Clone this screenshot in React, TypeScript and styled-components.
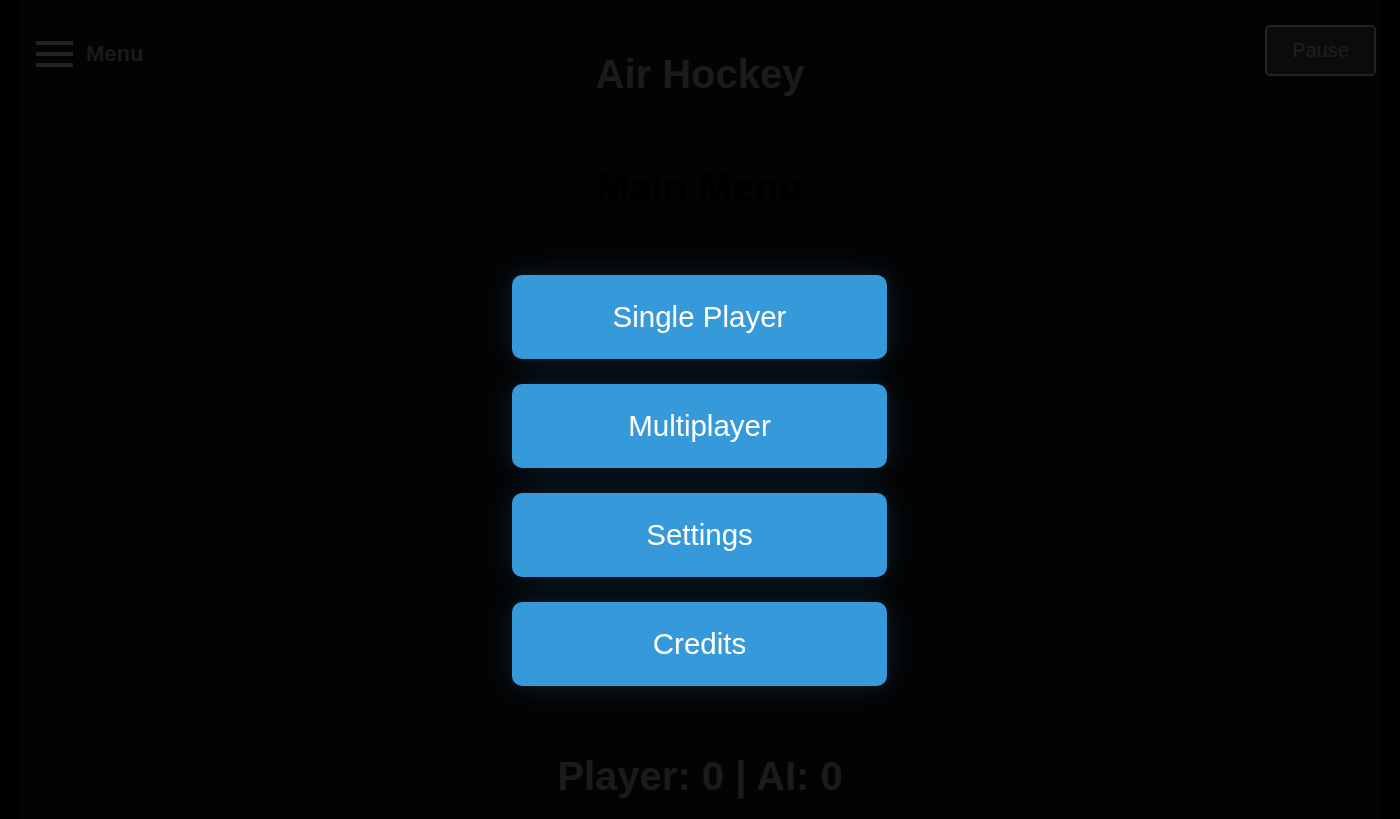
import React from "react";
import styled, { createGlobalStyle } from "styled-components";

const GlobalStyle = createGlobalStyle`
  html, body {
    margin: 0;
    padding: 0;
    background: #000;
    font-family: "Liberation Sans", Arial, sans-serif;
  }
  * {
    box-sizing: border-box;
  }
`;

const Page = styled.div`
  position: relative;
  min-height: 100vh;
  margin: 0 20px;
  background: #030303;
  display: flex;
  flex-direction: column;
  align-items: center;
`;

const TopBar = styled.header`
  width: 100%;
  display: grid;
  grid-template-columns: 1fr auto 1fr;
  align-items: start;
  padding: 25px 4px 0;
`;

const MenuToggle = styled.button`
  justify-self: start;
  display: flex;
  align-items: center;
  gap: 13px;
  margin: 16px 0 0 12px;
  padding: 0;
  border: none;
  background: none;
  color: #1b1b1b;
  font-family: inherit;
  font-size: 22px;
  font-weight: 700;
`;

const Burger = styled.span`
  display: flex;
  flex-direction: column;
  gap: 7px;
  width: 37px;

  span {
    height: 4px;
    background: #232323;
  }
`;

const Title = styled.h1`
  margin: 26px 0 0;
  font-size: 40px;
  font-weight: 700;
  color: #1b1b1b;
  line-height: 46px;
`;

const PauseButton = styled.button`
  justify-self: end;
  width: 111px;
  height: 51px;
  border: 2px solid #232323;
  border-radius: 5px;
  background: #0b0b0b;
  color: #202020;
  font-family: inherit;
  font-size: 20px;
`;

const Board = styled.div`
  flex: 1;
`;

const Score = styled.div`
  margin-bottom: 20px;
  font-size: 40px;
  font-weight: 700;
  color: #1b1b1b;
  line-height: 46px;
`;

const Overlay = styled.div`
  position: fixed;
  inset: 0;
  display: flex;
  flex-direction: column;
  align-items: center;
  padding: 164px 1px 0 0;
`;

const MenuHeading = styled.h2`
  margin: 0 0 65px;
  font-size: 40px;
  font-weight: 700;
  line-height: 46px;
  color: #000;
`;

const MenuList = styled.div`
  display: flex;
  flex-direction: column;
  gap: 25px;
`;

const MenuButton = styled.button`
  width: 375px;
  height: 84px;
  border: none;
  border-radius: 10px;
  background: #3699da;
  color: #fff;
  font-family: inherit;
  font-size: 29.5px;
  box-shadow: 0 0 30px rgba(52, 152, 219, 0.22);
  cursor: pointer;
`;

const items = ["Single Player", "Multiplayer", "Settings", "Credits"];

export default function App() {
  return (
    <>
      <GlobalStyle />
      <Page>
        <TopBar>
          <MenuToggle>
            <Burger>
              <span />
              <span />
              <span />
            </Burger>
            Menu
          </MenuToggle>
          <Title>Air Hockey</Title>
          <PauseButton>Pause</PauseButton>
        </TopBar>
        <Board />
        <Score>Player: 0 | AI: 0</Score>
      </Page>
      <Overlay>
        <MenuHeading>Main Menu</MenuHeading>
        <MenuList>
          {items.map((label) => (
            <MenuButton key={label}>{label}</MenuButton>
          ))}
        </MenuList>
      </Overlay>
    </>
  );
}
